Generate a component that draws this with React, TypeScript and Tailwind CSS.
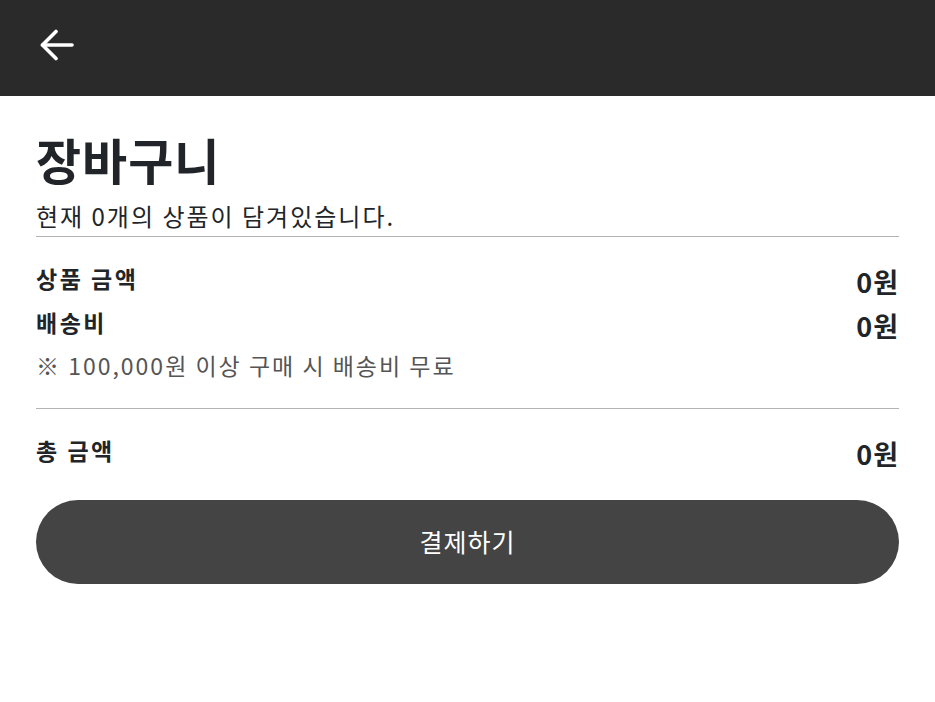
import React from 'react';

const font = { fontFamily: '"Noto Sans CJK KR", "Noto Sans", sans-serif' };

const Row = ({ label, className = '' }: { label: string; className?: string }) => (
  <div className={`flex justify-between items-start ${className}`}>
    <span className="text-[23px] font-bold leading-[32px] tracking-[2.5px]">{label}</span>
    <span className="text-[27px] font-bold leading-[34px] mt-[3px] tracking-[1px]">0원</span>
  </div>
);

export default function App() {
  return (
    <div className="min-h-screen bg-white text-[#212529]" style={font}>
      <header className="h-[96px] bg-[#2a2a2a] flex items-start pt-[29px] px-[40px]">
        <button type="button" aria-label="뒤로가기" className="text-white">
          <svg width="34" height="32" viewBox="0 0 34 32" fill="none" stroke="currentColor" strokeWidth="3.6" strokeLinecap="round" strokeLinejoin="round">
            <path d="M16 2.5 2.5 16 16 29.5" />
            <path d="M2.5 16H32" />
          </svg>
        </button>
      </header>

      <main className="px-[36px] pt-[32px]">
        <h1 className="text-[49px] font-bold leading-[62px] tracking-[1px]">장바구니</h1>
        <p className="mt-[11px] text-[24px] leading-[30px] tracking-[2px] pb-[5px] border-b border-[#b3b3b3]">
          현재 0개의 상품이 담겨있습니다.
        </p>

        <div className="pt-[25px] pb-[25px] border-b border-[#b3b3b3]">
          <Row label="상품 금액" />
          <Row label="배송비" className="mt-[7px]" />
          <p className="mt-[4px] text-[23px] leading-[36px] tracking-[2px] text-[#555555]">※ 100,000원 이상 구매 시 배송비 무료</p>
        </div>

        <Row label="총 금액" className="pt-[25px]" />

        <button type="button" className="mt-[29px] w-full h-[84px] rounded-full bg-[#444444] text-white text-[25px] tracking-[1px]">
          결제하기
        </button>
      </main>
    </div>
  );
}
